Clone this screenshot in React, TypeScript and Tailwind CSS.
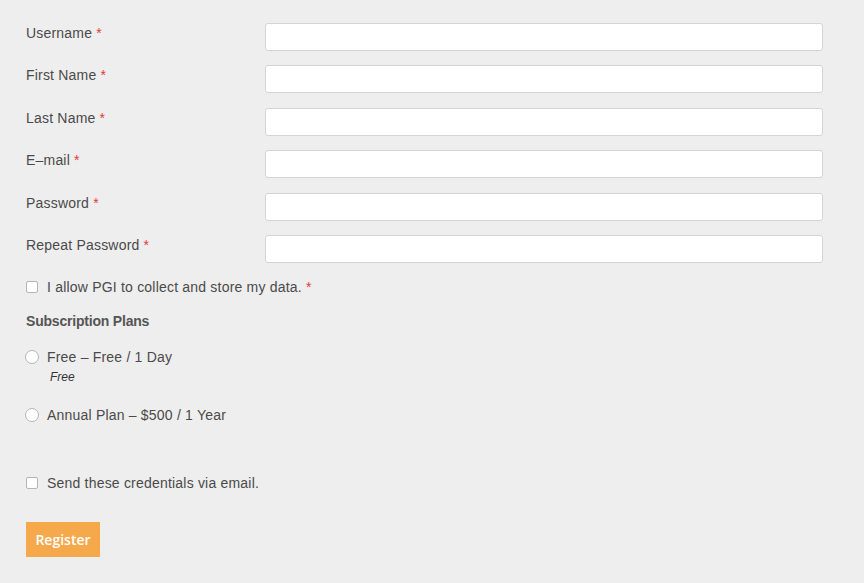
import React from "react";

const fields = ["Username", "First Name", "Last Name", "E-mail", "Password", "Repeat Password"];

function Req() {
  return <span className="text-[#e2393a]">&nbsp;*</span>;
}

export default function App() {
  return (
    <div
      className="min-h-[583px] bg-[#eeeeee] pl-[26px] pr-[41px] pt-[23px] text-[14px] tracking-[0.2px] text-[#4a4a4a]"
      style={{ fontFamily: '"Liberation Sans", Arial, sans-serif' }}
    >
      {fields.map((f, i) => (
        <div key={f} className={`flex ${i < fields.length - 1 ? "mb-[14.4px]" : ""}`}>
          <label className="w-[239px] shrink-0 leading-[20px]">
            {f.replace("-", "–")}
            <Req />
          </label>
          <input
            type={f.includes("Password") ? "password" : "text"}
            className="h-[28px] flex-1 rounded-[3px] border border-[#d4d4d4] bg-white outline-none"
          />
        </div>
      ))}

      <label className="mt-[14px] flex items-center leading-[20px]">
        <input
          type="checkbox"
          className="mr-[9px] h-[12px] w-[12px] appearance-none rounded-[2px] border border-[#b5b5b5] bg-white"
        />
        I allow PGI to collect and store my data.
        <Req />
      </label>

      <div className="mt-[14px] font-bold leading-[20px] tracking-[-0.2px] text-[#555]">Subscription Plans</div>

      <label className="mt-[16px] flex items-center leading-[20px]">
        <input
          type="radio"
          name="plan"
          className="ml-[-1px] mr-[8px] h-[14px] w-[14px] appearance-none rounded-full border border-[#b5b5b5] bg-white"
        />
        Free – Free / 1 Day
      </label>
      <div className="ml-[24px] mt-[2px] text-[12px] italic leading-[16px] tracking-normal text-[#333]">Free</div>

      <label className="mt-[20px] flex items-center leading-[20px]">
        <input
          type="radio"
          name="plan"
          className="ml-[-1px] mr-[8px] h-[14px] w-[14px] appearance-none rounded-full border border-[#b5b5b5] bg-white"
        />
        Annual Plan – $500 / 1 Year
      </label>

      <label className="mt-[48px] flex items-center leading-[20px]">
        <input
          type="checkbox"
          className="mr-[9px] h-[12px] w-[12px] appearance-none rounded-[2px] border border-[#b5b5b5] bg-white"
        />
        Send these credentials via email.
      </label>

      <button
        className="mt-[29px] h-[35px] w-[74px] bg-[#f5a94b] text-[14px] font-semibold tracking-normal text-white"
        style={{ fontFamily: '"Open Sans", sans-serif' }}
      >
        Register
      </button>
    </div>
  );
}
